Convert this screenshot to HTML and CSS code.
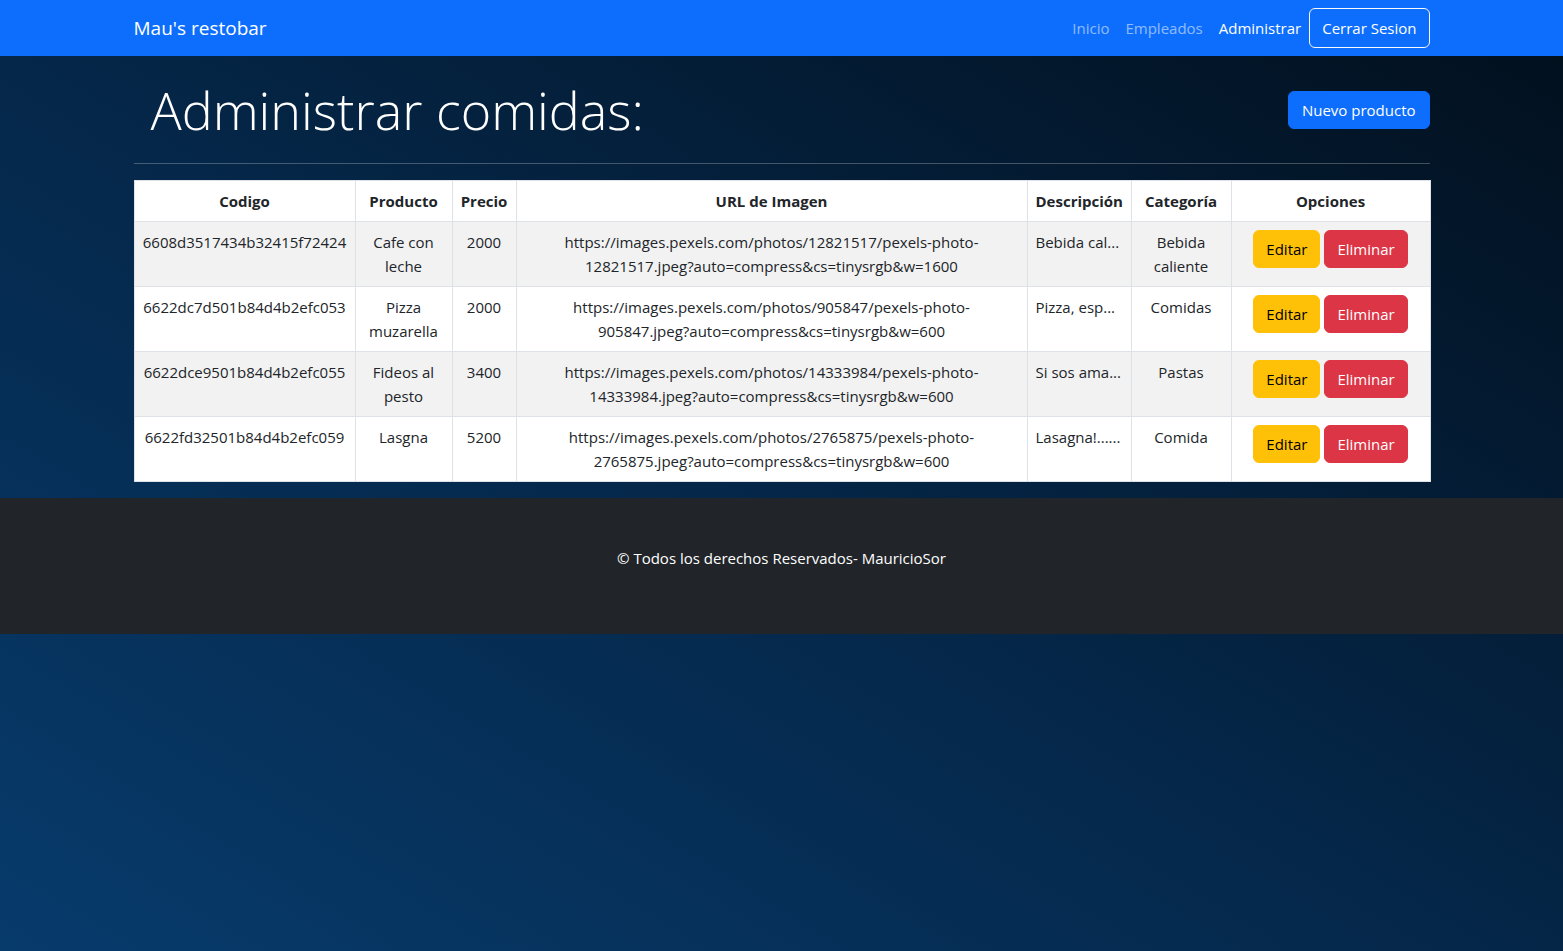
FILE: index.html
```html
<!DOCTYPE html>
<html lang="es">
<head>
<meta charset="utf-8">
<title>Mau's restobar</title>
<link rel="stylesheet" href="styles.css">
</head>
<body>
<nav class="navbar">
  <div class="container nav-inner">
    <a class="brand" href="#">Mau's restobar</a>
    <div class="nav-links">
      <a class="nav-link" href="#">Inicio</a>
      <a class="nav-link" href="#">Empleados</a>
      <a class="nav-link active" href="#">Administrar</a>
      <button class="btn btn-outline-light">Cerrar Sesion</button>
    </div>
  </div>
</nav>
<main class="container">
  <div class="title-row">
    <h1 class="title">Administrar comidas:</h1>
    <button class="btn btn-primary">Nuevo producto</button>
  </div>
  <hr class="divider">
  <table class="table">
    <colgroup>
      <col class="c-code"><col class="c-prod"><col class="c-price"><col class="c-url"><col class="c-desc"><col class="c-cat"><col class="c-opt">
    </colgroup>
    <thead>
      <tr><th>Codigo</th><th>Producto</th><th>Precio</th><th>URL de Imagen</th><th>Descripción</th><th>Categoría</th><th>Opciones</th></tr>
    </thead>
    <tbody>
      <tr class="odd">
        <td>6608d3517434b32415f72424</td><td>Cafe con leche</td><td>2000</td>
        <td>https://images.pexels.com/photos/12821517/pexels-photo-<br>12821517.jpeg?auto=compress&amp;cs=tinysrgb&amp;w=1600</td>
        <td class="left">Bebida cal...</td><td>Bebida caliente</td>
        <td class="opts"><button class="btn btn-warning">Editar</button> <button class="btn btn-danger">Eliminar</button></td>
      </tr>
      <tr>
        <td>6622dc7d501b84d4b2efc053</td><td>Pizza muzarella</td><td>2000</td>
        <td>https://images.pexels.com/photos/905847/pexels-photo-<br>905847.jpeg?auto=compress&amp;cs=tinysrgb&amp;w=600</td>
        <td class="left">Pizza, esp...</td><td>Comidas</td>
        <td class="opts"><button class="btn btn-warning">Editar</button> <button class="btn btn-danger">Eliminar</button></td>
      </tr>
      <tr class="odd">
        <td>6622dce9501b84d4b2efc055</td><td>Fideos al pesto</td><td>3400</td>
        <td>https://images.pexels.com/photos/14333984/pexels-photo-<br>14333984.jpeg?auto=compress&amp;cs=tinysrgb&amp;w=600</td>
        <td class="left">Si sos ama...</td><td>Pastas</td>
        <td class="opts"><button class="btn btn-warning">Editar</button> <button class="btn btn-danger">Eliminar</button></td>
      </tr>
      <tr>
        <td>6622fd32501b84d4b2efc059</td><td>Lasgna</td><td>5200</td>
        <td>https://images.pexels.com/photos/2765875/pexels-photo-<br>2765875.jpeg?auto=compress&amp;cs=tinysrgb&amp;w=600</td>
        <td class="left">Lasagna!......</td><td>Comida</td>
        <td class="opts"><button class="btn btn-warning">Editar</button> <button class="btn btn-danger">Eliminar</button></td>
      </tr>
    </tbody>
  </table>
</main>
<footer class="footer">
  <p>© Todos los derechos Reservados- MauricioSor</p>
</footer>
</body>
</html>
```
FILE: styles.css
```css
* { box-sizing: border-box; }
html { min-height: 100%; }
body {
  margin: 0;
  min-height: 100vh;
  font-family: "Open Sans", "Noto Sans", sans-serif;
  font-size: 15px;
  line-height: 24px;
  color: #212529;
  background: linear-gradient(to top right, #073b6c 0%, #05284b 45%, #020f1c 100%);
}
.container {
  width: 1320px;
  margin: 0 auto;
  padding: 0 12px;
}
.navbar {
  background: #0d6efd;
  height: 56px;
}
.nav-inner {
  display: flex;
  align-items: center;
  justify-content: space-between;
  height: 56px;
}
.brand {
  color: #fff;
  text-decoration: none;
  font-size: 19px;
  line-height: 30px;
}
.nav-links {
  display: flex;
  align-items: center;
}
.nav-link {
  color: rgba(255,255,255,0.55);
  text-decoration: none;
  padding: 8px;
  font-size: 15px;
}
.nav-link.active { color: #fff; }
.btn {
  font-family: inherit;
  font-size: 15px;
  line-height: 24px;
  padding: 6px 12px;
  border: 1px solid transparent;
  border-radius: 6px;
  cursor: pointer;
  vertical-align: middle;
}
.btn-outline-light {
  color: #fff;
  background: transparent;
  border-color: #f8f9fa;
  padding: 7px 12px;
}
.btn-primary { background: #0d6efd; border-color: #0d6efd; color: #fff; padding: 6px 13px; }
.btn-warning { background: #ffc107; border-color: #ffc107; color: #000; }
.btn-danger { background: #dc3545; border-color: #dc3545; color: #fff; }

.title-row {
  display: flex;
  align-items: center;
  justify-content: space-between;
  padding-top: 16px;
  height: 91px;
}
.title {
  margin: 0;
  padding-left: 17px;
  color: #fff;
  font-weight: 300;
  font-size: 52px;
  line-height: 64px;
}
.divider {
  margin: 16px 0;
  border: 0;
  border-top: 1px solid rgba(255,255,255,0.25);
}
.table {
  width: 100%;
  border-collapse: collapse;
  table-layout: fixed;
  background: #fff;
  margin-bottom: 16px;
}
.c-code { width: 221px; }
.c-prod { width: 97px; }
.c-price { width: 64px; }
.c-url { width: 511px; }
.c-desc { width: 104px; }
.c-cat { width: 100px; }
.c-opt { width: 199px; }
.table th, .table td {
  border: 1px solid #dee2e6;
  padding: 8px;
  text-align: center;
  vertical-align: top;
}
.table th {
  font-weight: 700;
  font-size: 15px;
}
.table td { color: #212529; }
.table td.left { text-align: left; white-space: nowrap; overflow: hidden; }
.table tr.odd td { background: #f2f2f2; }
.table td.opts { white-space: nowrap; padding-top: 8px; }
.footer {
  background: #212529;
  color: #fff;
  text-align: center;
  padding: 48px 0;
}
.footer p { margin: 0 0 16px; }
```
